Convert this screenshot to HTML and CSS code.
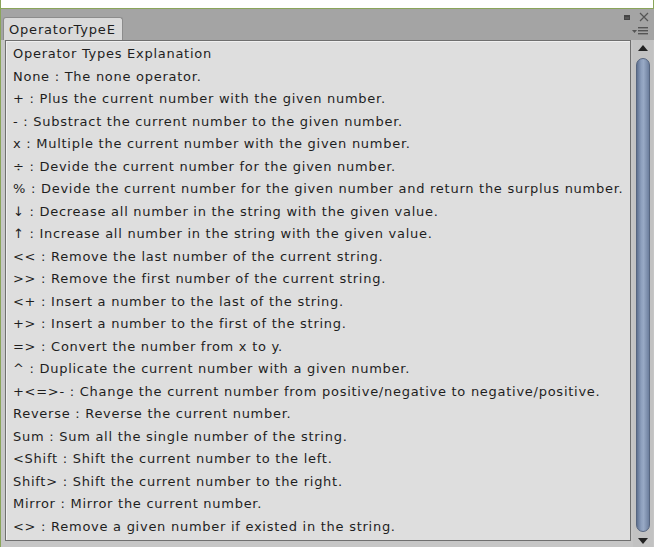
FILE: index.html
```html
<!DOCTYPE html>
<html>
<head>
<meta charset="utf-8">
<link rel="stylesheet" href="styles.css">
</head>
<body>
<div class="window">
  <div class="topband"></div>
  <div class="tabbar">
    <div class="tab">OperatorTypeE</div>
    <div class="winctrls">
      <div class="ctrlrow">
        <span class="maxbox"></span>
        <svg class="close" width="10" height="10" viewBox="0 0 10 10"><path d="M1 1 L9 9 M9 1 L1 9" stroke="#555" stroke-width="1.2" fill="none"/></svg>
      </div>
      <div class="ctrlrow menu">
        <svg width="18" height="8" viewBox="0 0 18 8"><path d="M1 3 L6 3 L3.5 6 Z" fill="#555"/><rect x="7" y="0" width="10" height="1.4" fill="#555"/><rect x="7" y="3" width="10" height="1.4" fill="#555"/><rect x="7" y="6" width="10" height="1.4" fill="#555"/></svg>
      </div>
    </div>
  </div>
  <div class="body">
    <div class="content">
      <div class="line">Operator Types Explanation</div>
      <div class="line">None : The none operator.</div>
      <div class="line">+ : Plus the current number with the given number.</div>
      <div class="line">- : Substract the current number to the given number.</div>
      <div class="line">x : Multiple the current number with the given number.</div>
      <div class="line">÷ : Devide the current number for the given number.</div>
      <div class="line">% : Devide the current number for the given number and return the surplus number.</div>
      <div class="line">↓ : Decrease all number in the string with the given value.</div>
      <div class="line">↑ : Increase all number in the string with the given value.</div>
      <div class="line">&lt;&lt; : Remove the last number of the current string.</div>
      <div class="line">&gt;&gt; : Remove the first number of the current string.</div>
      <div class="line">&lt;+ : Insert a number to the last of the string.</div>
      <div class="line">+&gt; : Insert a number to the first of the string.</div>
      <div class="line">=&gt; : Convert the number from x to y.</div>
      <div class="line">^ : Duplicate the current number with a given number.</div>
      <div class="line">+&lt;=&gt;- : Change the current number from positive/negative to negative/positive.</div>
      <div class="line">Reverse : Reverse the current number.</div>
      <div class="line">Sum : Sum all the single number of the string.</div>
      <div class="line">&lt;Shift : Shift the current number to the left.</div>
      <div class="line">Shift&gt; : Shift the current number to the right.</div>
      <div class="line">Mirror : Mirror the current number.</div>
      <div class="line">&lt;&gt; : Remove a given number if existed in the string.</div>
    </div>
    <div class="scrollbar">
      <div class="arrow up"></div>
      <div class="thumb"></div>
      <div class="arrow down"></div>
    </div>
  </div>
</div>
</body>
</html>
```
FILE: styles.css
```css
html, body {
  margin: 0;
  padding: 0;
  width: 654px;
  height: 547px;
  overflow: hidden;
  background: #c6c6c6;
}
.window {
  width: 654px;
  height: 547px;
  box-sizing: border-box;
  border-left: 1px solid #8aa55a;
  display: flex;
  flex-direction: column;
  font-family: "DejaVu Sans", Verdana, sans-serif;
  font-size: 13px;
  color: #1e1e1e;
}
.topband {
  height: 8px;
  background: #fff;
  border-bottom: 1px solid #8aa55a;
  border-right: 1px solid #8aa55a;
  flex: none;
}
.tabbar {
  height: 31px;
  flex: none;
  background: #a4a4a4;
  display: flex;
  align-items: flex-end;
  justify-content: space-between;
  position: relative;
}
.tab {
  margin-left: 2px;
  width: 120px;
  height: 23px;
  background: #dadada;
  border: 1px solid #8c8c8c;
  border-bottom: none;
  border-radius: 3px 3px 0 0;
  padding-left: 5px;
  box-sizing: border-box;
  line-height: 23px;
  letter-spacing: 0.8px;
  color: #1e1e1e;
}
.winctrls {
  display: flex;
  flex-direction: column;
  align-items: flex-end;
  padding-right: 5px;
  height: 100%;
}
.ctrlrow {
  display: flex;
  align-items: center;
  gap: 9px;
  margin-top: 3px;
}
.maxbox {
  width: 6px;
  height: 5px;
  border: 1px solid #444;
  border-top-width: 2px;
  background: #555;
  box-sizing: border-box;
}
.ctrlrow.menu {
  margin-top: 5px;
}
.body {
  flex: 1;
  display: flex;
  background: #c6c6c6;
  padding-left: 4px;
}
.content {
  width: 626px;
  height: 501px;
  box-sizing: border-box;
  background: #dedede;
  border: 1px solid #6f6f6f;
  box-shadow: inset 1px 1px 0 #f0f0f0;
  padding: 2px 0 0 7px;
}
.line {
  height: 22.52px;
  line-height: 22.52px;
  white-space: nowrap;
  letter-spacing: 0.73px;
}
.scrollbar {
  width: 20px;
  margin-left: 2px;
  display: flex;
  flex-direction: column;
  align-items: center;
  background: #c2c2c2;
}
.arrow {
  width: 0;
  height: 0;
  border-left: 5px solid transparent;
  border-right: 5px solid transparent;
}
.arrow.up {
  margin-top: 5px;
  border-bottom: 6px solid #222;
}
.arrow.down {
  margin-top: 6px;
  border-top: 6px solid #222;
}
.thumb {
  margin-top: 7px;
  width: 14px;
  height: 474px;
  border-radius: 7px;
  border: 1px solid #56657f;
  box-sizing: border-box;
  background: linear-gradient(to right, #5f7190, #8d9fbd 35%, #98a9c5 55%, #6d7f9e);
}
```
